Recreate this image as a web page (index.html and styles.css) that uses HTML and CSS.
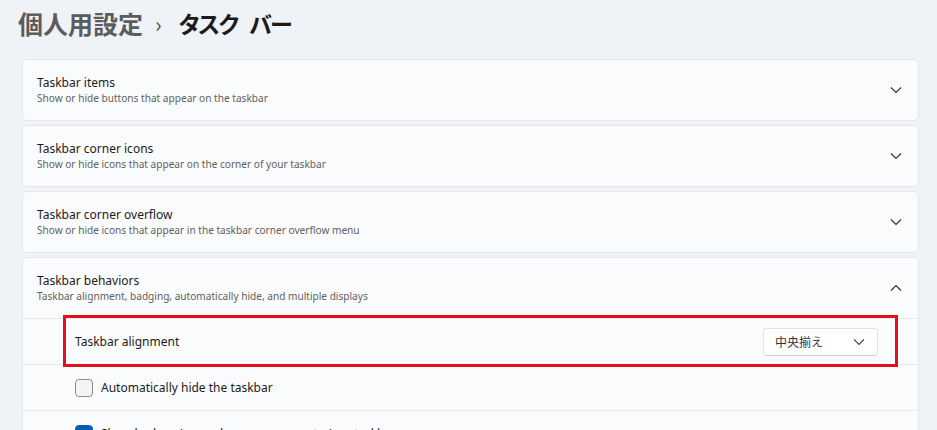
FILE: index.html
```html
<!DOCTYPE html>
<html>
  <head>
    <link rel="stylesheet" href="styles.css">
  </head>
  <body>
    <!-- breadcrumb title -->
    <div class="breadcrumb">
      <span class="crumb-parent">個人用設定</span>
      <span class="crumb-sep">›</span>
      <span class="crumb-current">タスク バー</span>
    </div>

    <div class="cards">
      <div class="card">
        <div class="card-head">
          <div class="card-text">
            <div class="card-title">Taskbar items</div>
            <div class="card-desc">Show or hide buttons that appear on the taskbar</div>
          </div>
          <svg class="chev" width="12" height="8" viewBox="0 0 12 8"><path d="M1 1.5 L6 6.5 L11 1.5" fill="none" stroke="#333" stroke-width="1.1"/></svg>
        </div>
      </div>

      <div class="card">
        <div class="card-head">
          <div class="card-text">
            <div class="card-title">Taskbar corner icons</div>
            <div class="card-desc">Show or hide icons that appear on the corner of your taskbar</div>
          </div>
          <svg class="chev" width="12" height="8" viewBox="0 0 12 8"><path d="M1 1.5 L6 6.5 L11 1.5" fill="none" stroke="#333" stroke-width="1.1"/></svg>
        </div>
      </div>

      <div class="card">
        <div class="card-head">
          <div class="card-text">
            <div class="card-title">Taskbar corner overflow</div>
            <div class="card-desc">Show or hide icons that appear in the taskbar corner overflow menu</div>
          </div>
          <svg class="chev" width="12" height="8" viewBox="0 0 12 8"><path d="M1 1.5 L6 6.5 L11 1.5" fill="none" stroke="#333" stroke-width="1.1"/></svg>
        </div>
      </div>

      <div class="card">
        <div class="card-head">
          <div class="card-text">
            <div class="card-title">Taskbar behaviors</div>
            <div class="card-desc">Taskbar alignment, badging, automatically hide, and multiple displays</div>
          </div>
          <svg class="chev" width="12" height="8" viewBox="0 0 12 8"><path d="M1 6.5 L6 1.5 L11 6.5" fill="none" stroke="#333" stroke-width="1.1"/></svg>
        </div>

        <div class="sub-row highlight">
          <span class="sub-label">Taskbar alignment</span>
          <div class="dropdown">
            <span>中央揃え</span>
            <svg width="12" height="8" viewBox="0 0 12 8"><path d="M1 1.5 L6 6.5 L11 1.5" fill="none" stroke="#444" stroke-width="1.1"/></svg>
          </div>
          <div class="red-box"></div>
        </div>

        <div class="sub-row">
          <span class="check"></span>
          <span class="sub-label">Automatically hide the taskbar</span>
        </div>

        <div class="sub-row">
          <span class="check checked"></span>
          <span class="sub-label">Show badges (unread messages counter) on taskbar apps</span>
        </div>
      </div>
    </div>
  </body>
</html>
```

FILE: styles.css
```css
body {
  margin: 0;
  background-color: #eff2f7;
  font-family: "Noto Sans", "Noto Sans CJK JP", sans-serif;
  color: #1b1b1b;
  overflow: hidden;
}

/* judul breadcrumb di atas */
.breadcrumb {
  display: flex;
  align-items: center;
  height: 50px;
  padding-left: 18px;
  margin-top: -2px;
  font-family: "Noto Sans CJK JP", sans-serif;
  font-size: 25px;
  font-weight: 700;
}

.crumb-parent {
  color: #5c5c5c;
  font-weight: 600;
}

.crumb-sep {
  color: #555;
  font-size: 22px;
  font-weight: 400;
  margin: 0 17px 0 12px;
}

.crumb-current {
  color: #1a1a1a;
  font-size: 23px;
  font-feature-settings: "palt";
  letter-spacing: -1.5px;
  word-spacing: 8px;
}

.cards {
  display: flex;
  flex-direction: column;
  gap: 4px;
  padding: 11px 18px 0 22px;
}

.card {
  background-color: #fafbfd;
  border: 1px solid #e4e6ea;
  border-radius: 5px;
}

.card-head {
  display: flex;
  align-items: center;
  justify-content: space-between;
  height: 60px;
  padding: 0 16px 0 14px;
}

.card-title {
  font-size: 12px;
  line-height: 16px;
  color: #1b1b1b;
}

.card-desc {
  font-size: 10.1px;
  line-height: 15px;
  color: #5f5f5f;
}

/* baris di dalam expander */
.sub-row {
  position: relative;
  display: flex;
  align-items: center;
  height: 45px;
  padding: 0 40px 0 52px;
  border-top: 1px solid #e8e9ec;
}

.sub-label {
  font-size: 12px;
  color: #1b1b1b;
}

.highlight {
  justify-content: space-between;
}

.dropdown {
  display: flex;
  align-items: center;
  justify-content: space-between;
  width: 115px;
  height: 28px;
  box-sizing: border-box;
  padding: 0 12px 0 11px;
  background-color: #ffffff;
  border: 1px solid #e3e3e3;
  border-bottom-color: #d0d0d0;
  border-radius: 4px;
  font-family: "Noto Sans CJK JP", sans-serif;
  font-size: 12px;
  color: #333;
}

/* kotak merah penanda */
.red-box {
  position: absolute;
  top: -4px;
  bottom: -3px;
  left: 40px;
  right: 20px;
  border: 3px solid #e3101b;
  z-index: 5;
}

.check {
  width: 16px;
  height: 16px;
  border: 1px solid #8b8b8b;
  border-radius: 4px;
  background-color: #f4f4f5;
  margin-right: 8px;
}

.checked {
  background-color: #005fb8;
  border-color: #005fb8;
  align-self: flex-start;
  margin-top: 14px;
}
```
